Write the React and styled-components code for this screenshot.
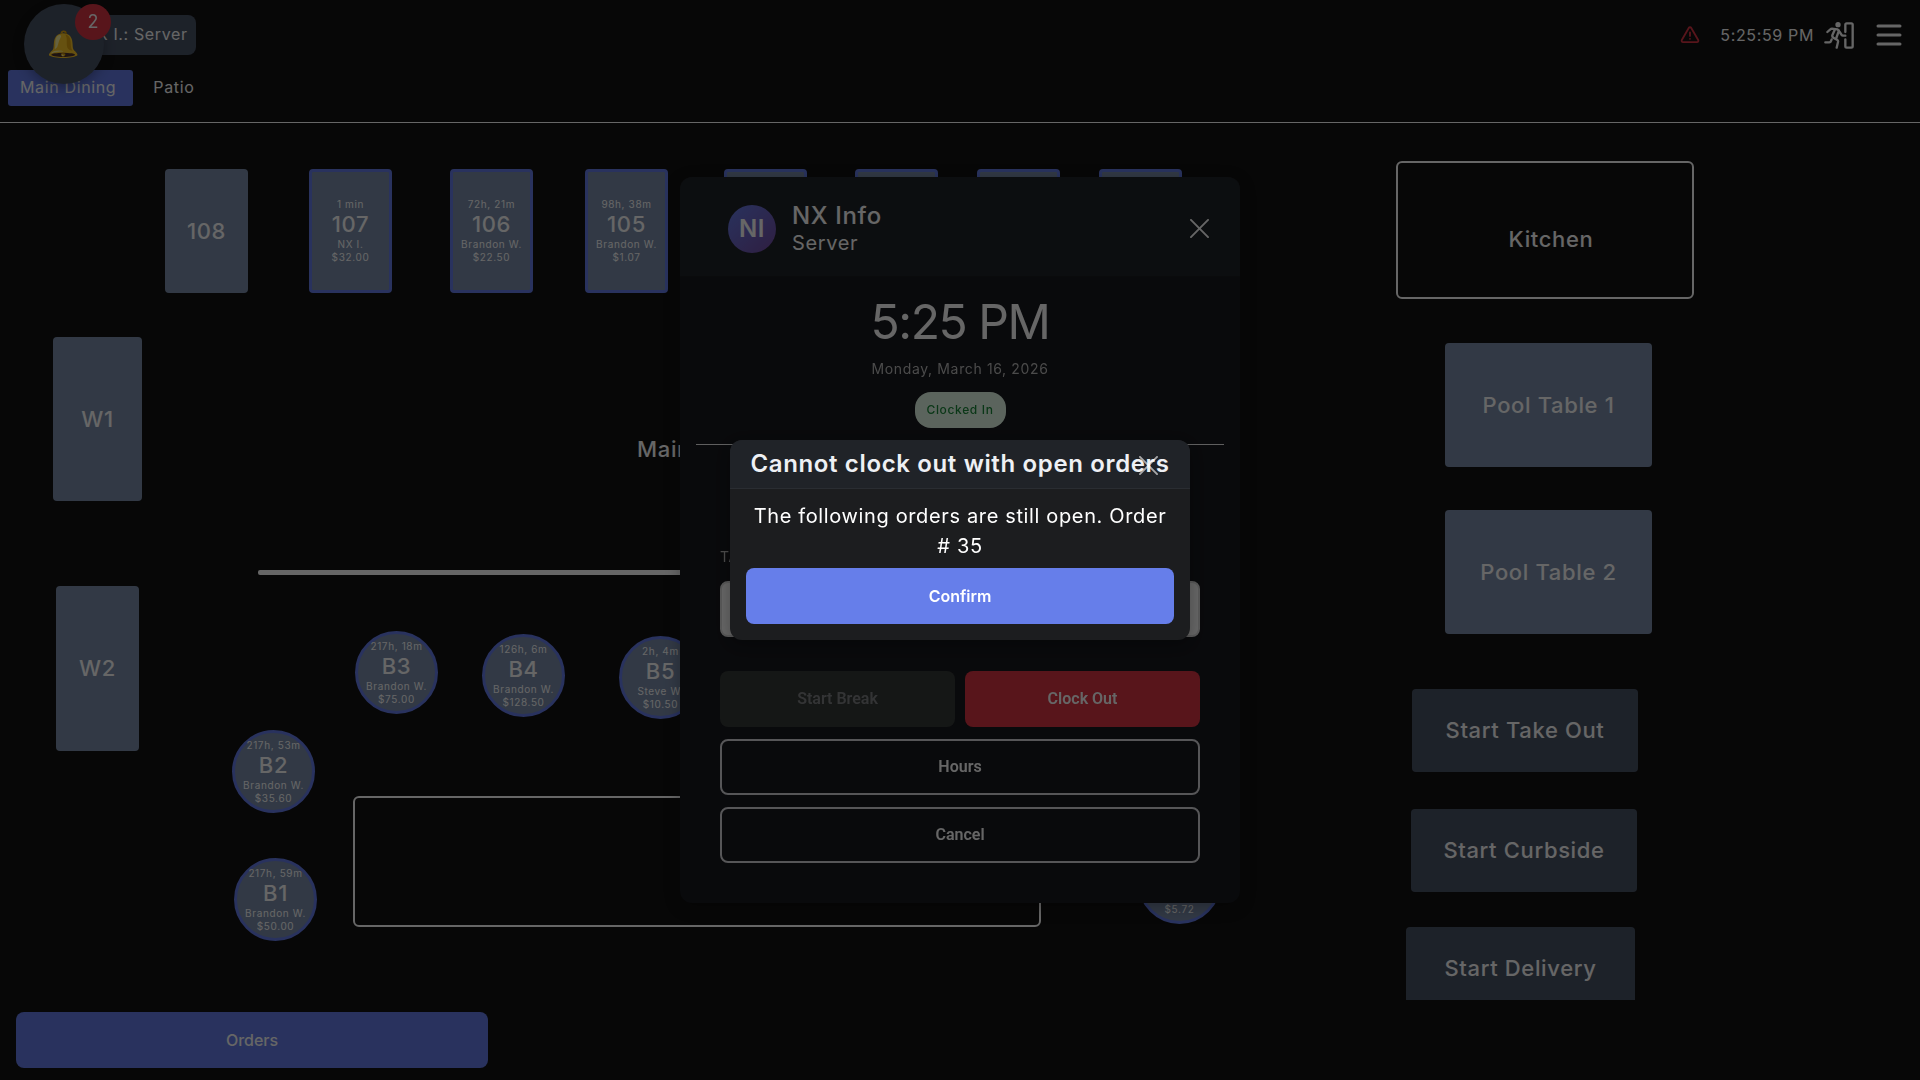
import React, { useState } from 'react';
import styled, { createGlobalStyle, css } from 'styled-components';

const GlobalStyle = createGlobalStyle`
  * {
    box-sizing: border-box;
  }
  body {
    margin: 0;
    background-color: #121212;
    color: #fff;
    font-family: Inter, Roboto, sans-serif;
    font-size: 16px;
    letter-spacing: 0.04em;
  }
  button, select {
    font-family: inherit;
    letter-spacing: inherit;
    color: inherit;
    cursor: pointer;
  }
`;

const Page = styled.div`
  height: 100vh;
  display: flex;
  flex-direction: column;
  overflow: hidden;
`;

const TopBar = styled.header`
  display: flex;
  justify-content: space-between;
  align-items: center;
  padding: 15px 16px 15px 84px;
`;

const UserChip = styled.button`
  height: 40px;
  padding: 0 8px 2px 0;
  border: 0;
  border-radius: 8px;
  background-color: #4a5568;
  font-size: 16px;
`;

const TopBarTools = styled.div`
  display: flex;
  align-items: center;
`;

const Clock = styled.time`
  margin: 0 10px 0 20px;
  font-size: 16px;
`;

const IconButton = styled.button`
  display: flex;
  align-items: center;
  justify-content: center;
  padding: 0;
  border: 0;
  background: none;
`;

const MenuButton = styled(IconButton)`
  width: 30px;
  margin-left: 20px;
`;

const Tabs = styled.nav`
  display: flex;
  gap: 10px;
  padding: 0 8px 16px;
  border-bottom: 1px solid #fff;
`;

const Tab = styled.button`
  height: 36px;
  padding: 0 ${({ $active }) => ($active ? 17 : 10)}px 2px ${({ $active }) => ($active ? 12 : 10)}px;
  border: 0;
  border-radius: 3px;
  background-color: ${({ $active }) => ($active ? '#667eea' : 'transparent')};
  font-size: 16px;
`;

const BellButton = styled.button`
  position: fixed;
  top: 4px;
  left: 24px;
  width: 80px;
  height: 80px;
  padding: 0 2px 2px 0;
  border: 0;
  border-radius: 50%;
  background-color: #4a5568;
  box-shadow: 0 4px 12px rgba(0, 0, 0, 0.3);
  font-size: 26px;
  letter-spacing: 0;
`;

const BellCount = styled.span`
  position: absolute;
  top: 0;
  right: -7px;
  width: 36px;
  height: 36px;
  border-radius: 50%;
  background-color: #dc3545;
  font-size: 18px;
  line-height: 36px;
`;

const Floor = styled.main`
  position: relative;
  flex: 1;
  overflow: hidden;
`;

const shapes = {
  table: css`
    border-radius: 4px;
    background-color: #7d8fad;
  `,
  round: css`
    border-radius: 50%;
    background-color: #7d8fad;
  `,
  action: css`
    border-radius: 4px;
    background-color: #4a5568;
  `,
  wall: css`
    border: 2px solid #fff;
    border-radius: 6px;
    background: none;
  `,
  line: css`
    border-radius: 2px;
    background-color: #fff;
  `,
  label: css`
    background: none;
  `,
};

const FloorItem = styled.button`
  position: absolute;
  left: ${({ $x }) => $x}px;
  top: ${({ $y }) => $y}px;
  width: ${({ $w }) => $w}px;
  height: ${({ $h }) => $h}px;
  display: flex;
  flex-direction: column;
  align-items: center;
  justify-content: center;
  padding: 0;
  border: 0;
  white-space: nowrap;
  ${({ $shape }) => shapes[$shape]}
  ${({ $busy }) => $busy && 'border: 3px solid #667eea;'}
`;

const ItemName = styled.span`
  font-size: 22px;
  font-weight: 500;
  line-height: 27px;
`;

const ItemInfo = styled.span`
  font-size: 10px;
  line-height: 13px;
`;

const Footer = styled.footer`
  padding: 12px 16px;
`;

const Button = styled.button`
  flex: 1 0 auto;
  height: 56px;
  padding-bottom: 2px;
  border: 0;
  border-radius: 8px;
  background-color: ${({ $color }) => $color};
  font-size: 16px;
  font-weight: 600;
  letter-spacing: 0;
`;

const OrdersButton = styled(Button)`
  width: 25%;
  font-weight: 500;
`;

const ClockButton = styled(Button)`
  font-family: Roboto, sans-serif;
  ${({ $outlined }) => $outlined && 'border: 2px solid #d8d8dc; background: none;'}

  &:disabled {
    color: #808285;
    cursor: default;
  }
`;

const Overlay = styled.div`
  position: fixed;
  inset: 0;
  display: flex;
  align-items: center;
  justify-content: center;
  background-color: ${({ $dim }) => ($dim ? 'rgba(0, 0, 0, 0.6)' : 'transparent')};
`;

const Dialog = styled.section`
  width: ${({ $width }) => $width}px;
  border-radius: 12px;
  overflow: hidden;
  background-color: ${({ $bg }) => $bg};
  box-shadow: 0 4px 16px rgba(0, 0, 0, 0.3);
`;

const EmployeeHeader = styled.header`
  display: flex;
  align-items: center;
  gap: 16px;
  height: 100px;
  padding: 4px 31px 0 48px;
  border-bottom: 1px solid #1a1c20;
  background-color: #202328;
`;

const Avatar = styled.div`
  width: 48px;
  height: 48px;
  border-radius: 50%;
  background: linear-gradient(135deg, #667eea, #764ba2);
  font-size: 24px;
  font-weight: 600;
  line-height: 48px;
  text-align: center;
`;

const EmployeeName = styled.h2`
  flex: 1;
  margin: 0;
  font-size: 24px;
  font-weight: 500;
  line-height: 28px;
`;

const EmployeeRole = styled.span`
  display: block;
  font-size: 20px;
  font-weight: 400;
  line-height: 26px;
`;

const Status = styled.div`
  display: flex;
  flex-direction: column;
  align-items: center;
  margin: 0 16px;
  padding: 16px 0;
  border-bottom: 1px solid #eee;
`;

const StatusTime = styled.time`
  font-size: 48px;
  line-height: 58px;
  letter-spacing: -0.03em;
`;

const StatusDate = styled.time`
  margin: 8px 0 13px;
  color: #bbb;
  font-size: 14px;
  line-height: 20px;
`;

const StatusBadge = styled.span`
  padding: 0 12px;
  border-radius: 16px;
  background-color: #e4fae9;
  color: #1b8a3a;
  font-size: 12px;
  font-weight: 500;
  line-height: 36px;
`;

const ClockForm = styled.form`
  display: flex;
  flex-direction: column;
  gap: 12px;
  padding: 100px 40px 40px;
`;

const FieldLabel = styled.label`
  color: #bbb;
  font-size: 14px;
  line-height: 24px;
`;

const Field = styled.select`
  width: 100%;
  height: 56px;
  margin-bottom: 22px;
  border: 2px solid #ddd;
  border-radius: 8px;
  background-color: #fff;
  color: #121212;
  appearance: none;
`;

const ButtonRow = styled.div`
  display: flex;
  gap: 10px;

  > button {
    flex: 1 1 0;
  }
`;

const AlertHeader = styled.header`
  position: relative;
  height: 49px;
  border-bottom: 1px solid #2a2d32;
  background-color: #202328;
`;

const AlertTitle = styled.h2`
  margin: 0;
  color: #eef0f4;
  font-size: 24px;
  font-weight: 600;
  line-height: 48px;
  text-align: center;
  white-space: nowrap;
`;

const AlertClose = styled(IconButton)`
  position: absolute;
  top: 16px;
  right: 32px;
  opacity: 0.6;
`;

const AlertBody = styled.div`
  display: flex;
  flex-direction: column;
  gap: 7px;
  padding: 12px 16px 16px;
`;

const AlertText = styled.p`
  margin: 0;
  font-size: 20px;
  line-height: 30px;
  text-align: center;
`;

const WarningIcon = () => (
  <svg width="20" height="18" viewBox="0 0 22 20" fill="none" stroke="#dc3545" strokeWidth="2" strokeLinecap="round" strokeLinejoin="round">
    <path d="M9.6 2.2 1.9 15.6A1.6 1.6 0 0 0 3.3 18h15.4a1.6 1.6 0 0 0 1.4-2.4L12.4 2.2a1.6 1.6 0 0 0-2.8 0Z" />
    <path d="M11 7v4M11 14.2v.1" />
  </svg>
);

const ExitIcon = () => (
  <svg width="30" height="27" viewBox="0 0 90 81" fill="none" stroke="#fff" strokeWidth="7" strokeLinecap="round" strokeLinejoin="round">
    <circle cx="42" cy="8" r="8" fill="#fff" stroke="none" />
    <path d="M64 30V8Q64 4 68 4H82Q86 4 86 8V73Q86 77 82 77H68Q64 77 64 73V52" />
    <path d="M10 30 19 22Q21 20 24 20L40 22Q45 24 47 30L53 39Q54 41 57 41H64" />
    <path d="M32 24 25 40Q24 44 28 47L40 54Q43 56 42 60L38 77" />
    <path d="M44 28 37 48" />
    <path d="M4 61H16Q20 61 21 57L23 52" />
  </svg>
);

const MenuIcon = () => (
  <svg width="26" height="22" viewBox="0 0 26 22" stroke="#fff" strokeWidth="3" strokeLinecap="round">
    <path d="M2 2h22M2 11h22M2 20h22" />
  </svg>
);

const CloseIcon = () => (
  <svg width="19" height="19" viewBox="0 0 20 20" stroke="#fff" strokeWidth="2" strokeLinecap="round">
    <path d="M1 1l18 18M19 1L1 19" />
  </svg>
);

const floorItems = [
  { x: 165, y: 46, w: 83, h: 124, name: '108' },
  { x: 309, y: 46, w: 83, h: 124, name: '107', time: '1 min', server: 'NX I.', total: '$32.00' },
  { x: 450, y: 46, w: 83, h: 124, name: '106', time: '72h, 21m', server: 'Brandon W.', total: '$22.50' },
  { x: 585, y: 46, w: 83, h: 124, name: '105', time: '98h, 38m', server: 'Brandon W.', total: '$1.07' },
  { x: 724, y: 46, w: 83, h: 124, busy: true },
  { x: 855, y: 46, w: 83, h: 124, busy: true },
  { x: 977, y: 46, w: 83, h: 124, busy: true },
  { x: 1099, y: 46, w: 83, h: 124, busy: true },
  { x: 53, y: 214, w: 89, h: 164, name: 'W1' },
  { x: 56, y: 463, w: 83, h: 165, name: 'W2' },
  { shape: 'label', x: 636, y: 311, w: 56, h: 30, name: 'Main' },
  { shape: 'line', x: 258, y: 447, w: 600, h: 5 },
  { shape: 'wall', x: 353, y: 673, w: 688, h: 131 },
  { shape: 'round', x: 355, y: 508, w: 83, h: 83, name: 'B3', time: '217h, 18m', server: 'Brandon W.', total: '$75.00' },
  { shape: 'round', x: 482, y: 511, w: 83, h: 83, name: 'B4', time: '126h, 6m', server: 'Brandon W.', total: '$128.50' },
  { shape: 'round', x: 619, y: 513, w: 83, h: 83, name: 'B5', time: '2h, 4m', server: 'Steve W.', total: '$10.50' },
  { shape: 'round', x: 232, y: 607, w: 83, h: 83, name: 'B2', time: '217h, 53m', server: 'Brandon W.', total: '$35.60' },
  { shape: 'round', x: 234, y: 735, w: 83, h: 83, name: 'B1', time: '217h, 59m', server: 'Brandon W.', total: '$50.00' },
  { shape: 'round', x: 1138, y: 718, w: 83, h: 83, name: 'B9', time: '1h, 2m', server: 'Steve W.', total: '$5.72' },
  { shape: 'wall', x: 1396, y: 38, w: 298, h: 138 },
  { shape: 'label', x: 1501, y: 101, w: 100, h: 30, name: 'Kitchen' },
  { x: 1445, y: 220, w: 207, h: 124, name: 'Pool Table 1' },
  { x: 1445, y: 387, w: 207, h: 124, name: 'Pool Table 2' },
  { shape: 'action', x: 1412, y: 566, w: 226, h: 83, name: 'Start Take Out' },
  { shape: 'action', x: 1411, y: 686, w: 226, h: 83, name: 'Start Curbside' },
  { shape: 'action', x: 1406, y: 804, w: 229, h: 83, name: 'Start Delivery' },
];

const App = () => {
  const [activeTab, setActiveTab] = useState('Main Dining');

  return (
    <>
      <GlobalStyle />
      <Page>
        <TopBar>
          <UserChip>NX I.: Server</UserChip>
          <TopBarTools>
            <WarningIcon />
            <Clock>5:25:59 PM</Clock>
            <IconButton aria-label="Clock out">
              <ExitIcon />
            </IconButton>
            <MenuButton aria-label="Menu">
              <MenuIcon />
            </MenuButton>
          </TopBarTools>
        </TopBar>
        <Tabs>
          {['Main Dining', 'Patio'].map((tab) => (
            <Tab key={tab} $active={tab === activeTab} onClick={() => setActiveTab(tab)}>
              {tab}
            </Tab>
          ))}
        </Tabs>
        <Floor>
          {floorItems.map(({ shape = 'table', x, y, w, h, name, time, server, total, busy }) => (
            <FloorItem key={`${x}-${y}`} $shape={shape} $x={x} $y={y} $w={w} $h={h} $busy={busy || !!time}>
              {time && <ItemInfo>{time}</ItemInfo>}
              {name && <ItemName>{name}</ItemName>}
              {server && <ItemInfo>{server}</ItemInfo>}
              {total && <ItemInfo>{total}</ItemInfo>}
            </FloorItem>
          ))}
        </Floor>
        <Footer>
          <OrdersButton $color="#667eea">Orders</OrdersButton>
        </Footer>
        <BellButton aria-label="Notifications">
          🔔
          <BellCount>2</BellCount>
        </BellButton>
      </Page>

      <Overlay>
        <Dialog $width={560} $bg="#17191e">
          <EmployeeHeader>
            <Avatar>NI</Avatar>
            <EmployeeName>
              NX Info
              <EmployeeRole>Server</EmployeeRole>
            </EmployeeName>
            <IconButton aria-label="Close">
              <CloseIcon />
            </IconButton>
          </EmployeeHeader>
          <Status>
            <StatusTime>5:25 PM</StatusTime>
            <StatusDate>Monday, March 16, 2026</StatusDate>
            <StatusBadge>Clocked In</StatusBadge>
          </Status>
          <ClockForm>
            <FieldLabel htmlFor="task">TASK</FieldLabel>
            <Field id="task" />
            <ButtonRow>
              <ClockButton type="button" $color="#363a38" disabled>
                Start Break
              </ClockButton>
              <ClockButton type="button" $color="#dc3545">
                Clock Out
              </ClockButton>
            </ButtonRow>
            <ClockButton type="button" $outlined>
              Hours
            </ClockButton>
            <ClockButton type="button" $outlined>
              Cancel
            </ClockButton>
          </ClockForm>
        </Dialog>
      </Overlay>

      <Overlay $dim>
        <Dialog $width={460} $bg="#1c1d1f" role="alertdialog" aria-labelledby="alert-title">
          <AlertHeader>
            <AlertTitle id="alert-title">Cannot clock out with open orders</AlertTitle>
            <AlertClose aria-label="Close">
              <CloseIcon />
            </AlertClose>
          </AlertHeader>
          <AlertBody>
            <AlertText>The following orders are still open. Order # 35</AlertText>
            <Button $color="#667eea">Confirm</Button>
          </AlertBody>
        </Dialog>
      </Overlay>
    </>
  );
};

export default App;
